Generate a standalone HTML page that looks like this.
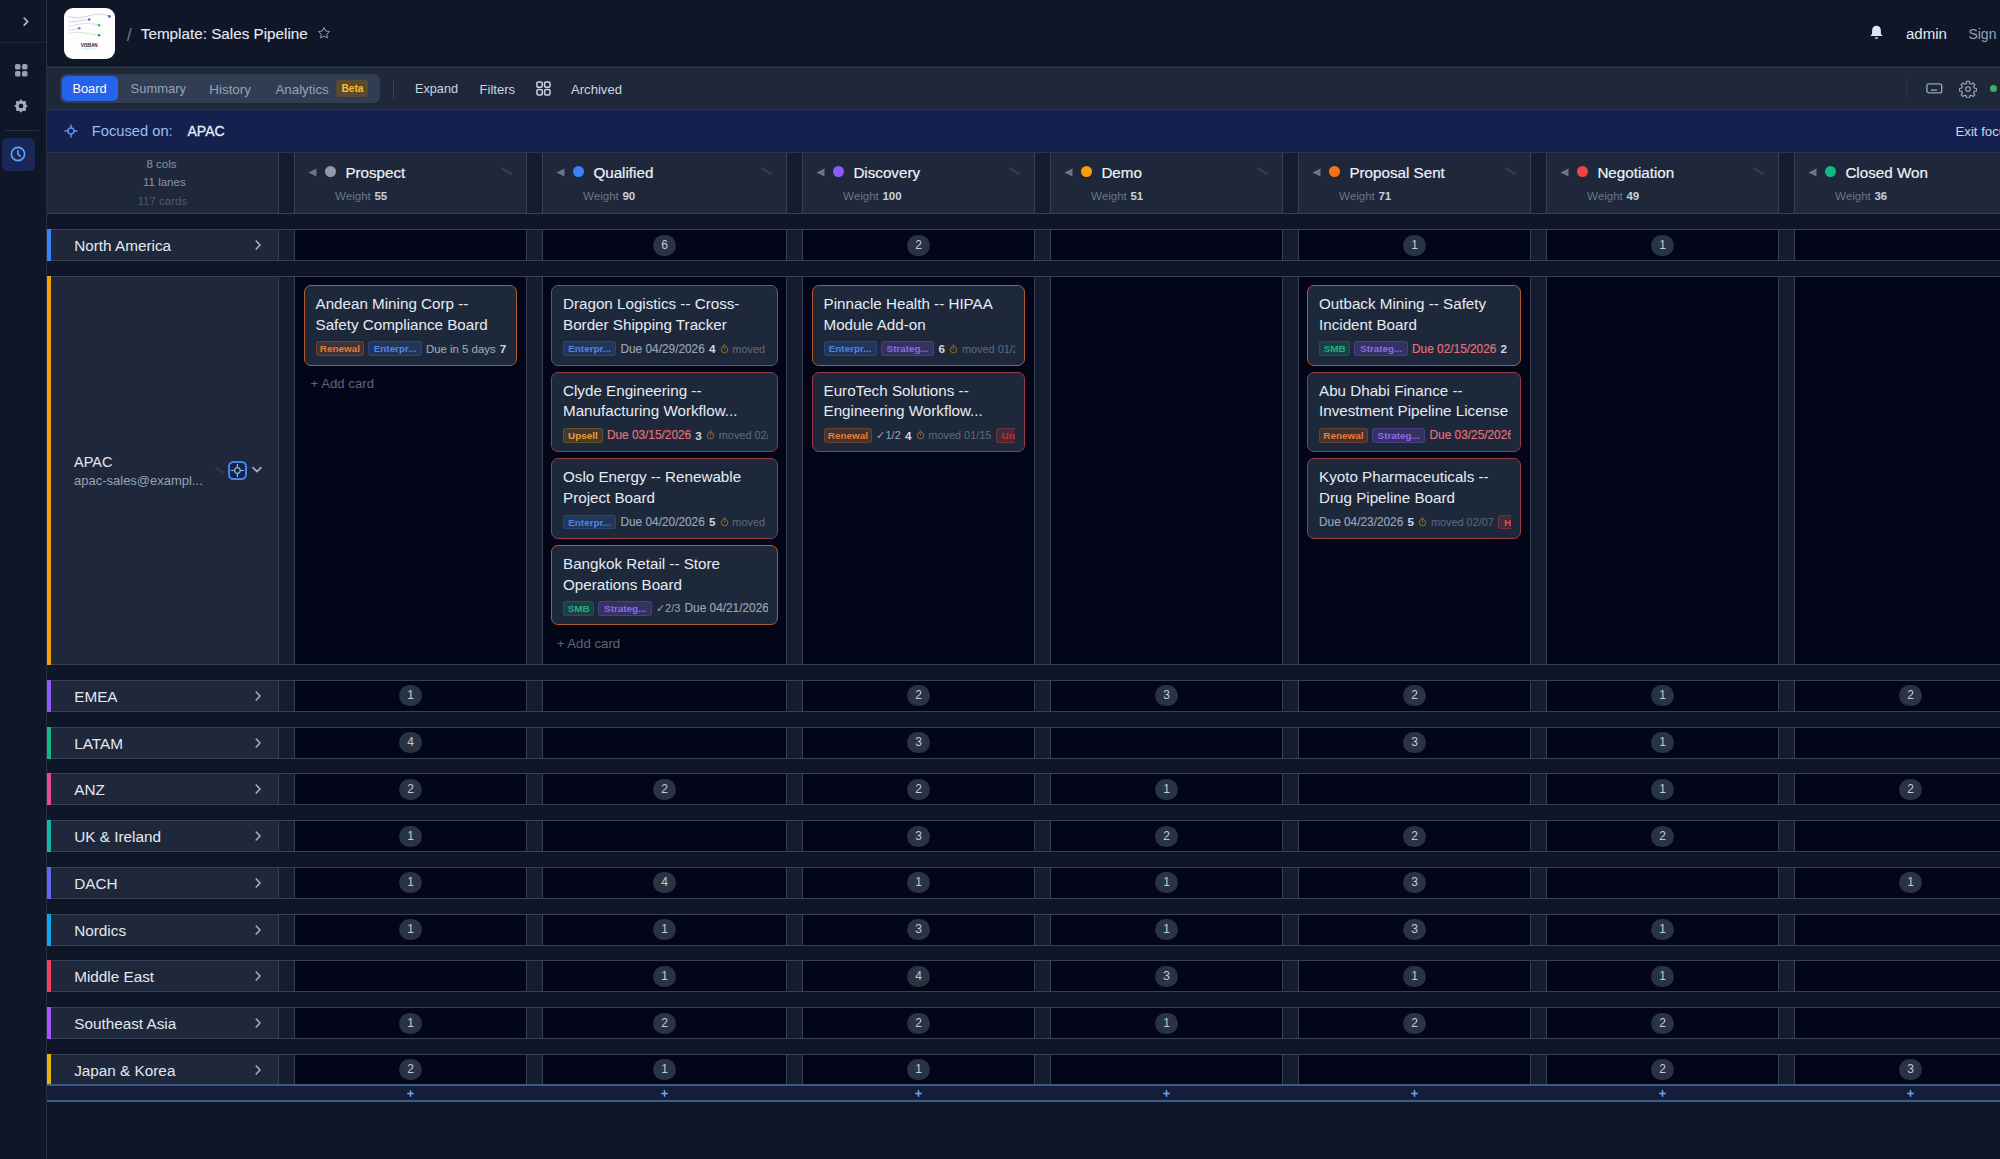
<!DOCTYPE html><html><head><meta charset="utf-8"><style>
*{margin:0;padding:0;box-sizing:border-box}
html,body{width:2000px;height:1159px;overflow:hidden;background:#0f1628;font-family:"Liberation Sans",sans-serif}
.a{position:absolute}
.t{position:absolute;white-space:nowrap}
.card{position:absolute;background:#1e283b;border:1px solid;border-radius:7px;overflow:hidden}
.tt{position:absolute;font-size:15.2px;line-height:20.4px;color:#e6ebf2;white-space:nowrap}
.meta{position:absolute;left:11px;top:55.2px;height:15px;white-space:nowrap;overflow:hidden;display:flex;align-items:center;gap:4.2px}
.bdg{display:inline-block;height:14.5px;line-height:13px;padding:0;text-align:center;overflow:hidden;border:0.8px solid;border-radius:3px;font-size:9.9px;font-weight:700;flex:none}
.due{font-size:11.85px;color:#9aa4b4;flex:none;-webkit-text-stroke:0.15px currentColor}
.num{font-size:11.7px;color:#d0d6e0;flex:none;font-weight:700}
.chk{font-size:11px;color:#9aa4b4;flex:none}
.tim{display:inline-flex;flex:none;margin-right:-0.5px}
.mv{font-size:10.9px;color:#5f6a7b;flex:none}
</style></head><body><div class="a" style="left:0.00px;top:0.00px;width:46.00px;height:1159.00px;background:#0f1628;"></div>
<div class="a" style="left:46.00px;top:0.00px;width:1.00px;height:1159.00px;background:#273143;"></div>
<div class="a" style="left:0.00px;top:42.00px;width:46.00px;height:1.00px;background:#1f2838;"></div>
<svg class="a" style="left:19px;top:15px" width="12" height="12" viewBox="0 0 12 12"><path d="M5.2 3 L8.6 6.6 L5.2 10.2" fill="none" stroke="#b0b9c8" stroke-width="1.7" stroke-linecap="round" stroke-linejoin="round"/></svg>
<svg class="a" style="left:15px;top:64px" width="13" height="13" viewBox="0 0 13 13" fill="#94a0b4"><rect x="0" y="0" width="5.5" height="5.5" rx="1.6"/><rect x="7" y="0" width="5.5" height="5.5" rx="1.6"/><rect x="0" y="7" width="5.5" height="5.5" rx="1.6"/><rect x="7" y="7" width="5.5" height="5.5" rx="1.6"/></svg>
<svg class="a" style="left:14.4px;top:99px" width="14" height="14" viewBox="0 0 14 14"><path fill="#a3aec2" stroke="#a3aec2" stroke-width="0.9" stroke-linejoin="round" fill-rule="evenodd" d="M7.00 0.70 L8.80 2.66 L11.45 2.55 L11.34 5.20 L13.30 7.00 L11.34 8.80 L11.45 11.45 L8.80 11.34 L7.00 13.30 L5.20 11.34 L2.55 11.45 L2.66 8.80 L0.70 7.00 L2.66 5.20 L2.55 2.55 L5.20 2.66Z M7 4.6a2.4 2.4 0 1 0 0 4.8a2.4 2.4 0 1 0 0-4.8z"/><circle cx="7" cy="7" r="2.3" fill="#0f1628"/></svg>
<div class="a" style="left:5.00px;top:130.00px;width:34.00px;height:1.00px;background:#263042;"></div>
<div class="a" style="left:2.00px;top:137.50px;width:32.50px;height:33.00px;background:#1a2759;border-radius:6px;"></div>
<svg class="a" style="left:10px;top:146px" width="16" height="16" viewBox="0 0 16 16"><circle cx="8" cy="8" r="6.6" fill="none" stroke="#60a5fa" stroke-width="1.6"/><path d="M8 4.6 V8.2 L10.2 10.2" fill="none" stroke="#60a5fa" stroke-width="1.6" stroke-linecap="round"/></svg>
<div class="a" style="left:47.00px;top:0.00px;width:1953.00px;height:66.00px;background:#0f1628;"></div>
<div class="a" style="left:64px;top:8px;width:50.5px;height:50.5px;background:#fdfdfd;border-radius:9px;"></div>
<svg class="a" style="left:64px;top:8px" width="51" height="51" viewBox="0 0 51 51">
<path d="M4 8.2 C12 11 20 9.5 27 7.2 S40 6.5 45.4 8.4" fill="none" stroke="#c9c6dc" stroke-width="0.8"/>
<path d="M4.3 13.9 C12 14 18 12 25.2 11.5" fill="none" stroke="#c9c6dc" stroke-width="0.8"/>
<path d="M4.3 18.5 C12 17 18 15 24.5 15.4 S32 16.5 35.1 17.2" fill="none" stroke="#b7e3d2" stroke-width="0.8"/>
<path d="M4.3 22.7 C9 22 12 20.5 15.2 20.3" fill="none" stroke="#c9c6dc" stroke-width="0.8"/>
<path d="M4.5 25.5 C8 24.5 11 24 14 24.2 S28 26 35.1 27.3" fill="none" stroke="#b7e3d2" stroke-width="0.8"/>
<circle cx="45.4" cy="8.4" r="1.3" fill="#5b4fb0"/>
<circle cx="25.2" cy="11.5" r="1.3" fill="#6a5cc0"/>
<circle cx="35.1" cy="17.2" r="1.3" fill="#34b47d"/>
<circle cx="15.2" cy="20.3" r="1.3" fill="#8270d0"/>
<circle cx="35.1" cy="27.3" r="1.3" fill="#2a9a67"/>
<text x="25.2" y="39" text-anchor="middle" font-family="Liberation Sans" font-weight="700" font-size="4.6" fill="#2b2b33" letter-spacing="-0.1">VISBAN</text>
<rect x="18" y="40.6" width="14" height="0.6" fill="#bfe5d4"/>
</svg>
<div class="t " style="left:126.80px;top:25.56px;font-size:18px;line-height:18px;color:#6b778a;">/</div>
<div class="t " style="left:140.80px;top:25.79px;font-size:15.25px;line-height:15.25px;color:#e6ebf3;-webkit-text-stroke:0.1px #e6ebf3;">Template: Sales Pipeline</div>
<svg class="a" style="left:317px;top:26px" width="14" height="14" viewBox="0 0 24 24"><path d="M12 2.5l2.9 6.1 6.6.8-4.9 4.5 1.3 6.6L12 17.2l-5.9 3.3 1.3-6.6L2.5 9.4l6.6-.8z" fill="none" stroke="#94a3b8" stroke-width="1.6" stroke-linejoin="round"/></svg>
<svg class="a" style="left:1869px;top:25px" width="15" height="16" viewBox="0 0 15 16"><path d="M7.5 0.8c-2.6 0-4.4 2-4.4 4.6v3.4L1.4 11h12.2l-1.7-2.2V5.4c0-2.6-1.8-4.6-4.4-4.6z" fill="#dfe5ee"/><rect x="6" y="12.2" width="3" height="1.6" rx="0.8" fill="#dfe5ee"/></svg>
<div class="t " style="left:1906.00px;top:25.96px;font-size:15.05px;line-height:15.05px;color:#e2e8f0;">admin</div>
<div class="t " style="left:1968.40px;top:26.85px;font-size:14px;line-height:14px;color:#94a3b8;">Sign out</div>
<div class="a" style="left:47.00px;top:66.00px;width:1953.00px;height:43.50px;background:#1e2839;"></div>
<div class="a" style="left:47.00px;top:66.50px;width:1953.00px;height:1.00px;background:#2b3548;"></div>
<div class="a" style="left:47.00px;top:109.00px;width:1953.00px;height:1.00px;background:#2b3548;"></div>
<div class="a" style="left:60.00px;top:74.00px;width:320.00px;height:29.00px;background:#313d52;border-radius:6px;"></div>
<div class="a" style="left:62.00px;top:76.00px;width:56.00px;height:25.00px;background:#2563eb;border-radius:5px;"></div>
<div class="t " style="left:72.40px;top:82.97px;font-size:12.85px;line-height:12.85px;color:#ffffff;">Board</div>
<div class="t " style="left:130.60px;top:82.89px;font-size:12.95px;line-height:12.95px;color:#94a3b8;">Summary</div>
<div class="t " style="left:209.30px;top:82.51px;font-size:13.4px;line-height:13.4px;color:#94a3b8;">History</div>
<div class="t " style="left:275.40px;top:82.55px;font-size:13.35px;line-height:13.35px;color:#94a3b8;">Analytics</div>
<div class="a" style="left:336.00px;top:80.00px;width:32.00px;height:17.00px;background:#5a4a32;border-radius:4px;"></div>
<div class="t " style="left:341.50px;top:84.41px;font-size:10.15px;line-height:10.15px;color:#fbbf24;font-weight:700;">Beta</div>
<div class="a" style="left:393.00px;top:80.00px;width:1.00px;height:17.50px;background:#364256;"></div>
<div class="t " style="left:415.00px;top:83.35px;font-size:12.7px;line-height:12.7px;color:#cbd5e1;">Expand</div>
<div class="t " style="left:479.60px;top:83.06px;font-size:13.04px;line-height:13.04px;color:#cbd5e1;">Filters</div>
<svg class="a" style="left:536px;top:81px" width="15" height="15" viewBox="0 0 15 15" fill="none" stroke="#cbd5e1" stroke-width="1.5"><rect x="0.9" y="0.9" width="5.4" height="5.4" rx="1.5"/><rect x="8.6" y="0.9" width="5.4" height="5.4" rx="1.5"/><rect x="0.9" y="8.6" width="5.4" height="5.4" rx="1.5"/><rect x="8.6" y="8.6" width="5.4" height="5.4" rx="1.5"/></svg>
<div class="t " style="left:571.00px;top:83.00px;font-size:13.11px;line-height:13.11px;color:#cbd5e1;">Archived</div>
<div class="a" style="left:1906.00px;top:79.00px;width:1.00px;height:18.50px;background:#2a3447;"></div>
<svg class="a" style="left:1926px;top:83px" width="17" height="11" viewBox="0 0 17 11" fill="none" stroke="#94a3b8" stroke-width="1.4"><rect x="0.9" y="0.9" width="14.8" height="9" rx="2"/><path d="M5 7.1h6"/></svg>
<svg class="a" style="left:1958.5px;top:80px" width="18" height="18" viewBox="0 0 24 24" fill="none" stroke="#94a3b8" stroke-width="1.6" stroke-linejoin="round"><path d="M10.3 1.8h3.4l.6 3 1.9.8 2.5-1.7 2.4 2.4-1.7 2.5.8 1.9 3 .6v3.4l-3 .6-.8 1.9 1.7 2.5-2.4 2.4-2.5-1.7-1.9.8-.6 3h-3.4l-.6-3-1.9-.8-2.5 1.7-2.4-2.4 1.7-2.5-.8-1.9-3-.6v-3.4l3-.6.8-1.9-1.7-2.5 2.4-2.4 2.5 1.7 1.9-.8z"/><circle cx="12" cy="12" r="3"/></svg>
<div class="a" style="left:1990.20px;top:85.10px;width:7.00px;height:7.00px;background:#3fb060;border-radius:50%;"></div>
<div class="a" style="left:47.00px;top:110.00px;width:1953.00px;height:42.50px;background:#14214e;"></div>
<svg class="a" style="left:64px;top:124px" width="14" height="14" viewBox="0 0 14 14" fill="none" stroke="#5b93f0" stroke-width="1.5"><circle cx="7" cy="7" r="3"/><path d="M7 0.5v3.5M7 10v3.5M0.5 7h3.5M10 7h3.5"/></svg>
<div class="t " style="left:91.80px;top:123.56px;font-size:14.7px;line-height:14.7px;color:#9bbcf0;">Focused on:</div>
<div class="t " style="left:187.50px;top:124.15px;font-size:14.0px;line-height:14.0px;color:#e6ecf8;-webkit-text-stroke:0.3px #e6ecf8;">APAC</div>
<div class="t " style="left:1955.50px;top:124.83px;font-size:13.2px;line-height:13.2px;color:#cdd6ea;">Exit focus</div>
<div class="a" style="left:47.00px;top:152.50px;width:1953.00px;height:1006.50px;background:#0f1628;"></div>
<div class="a" style="left:47.00px;top:153.00px;width:1953.00px;height:61.00px;background:#141c2e;"></div>
<div class="a" style="left:47.00px;top:213.00px;width:1953.00px;height:1.00px;background:#374155;"></div>
<div class="a" style="left:47.00px;top:153.00px;width:231.50px;height:60.00px;background:#1e283a;"></div>
<div class="a" style="left:278.00px;top:153.00px;width:1.00px;height:60.00px;background:#374155;"></div>
<div class="a" style="left:47.00px;top:152.00px;width:1953.00px;height:1.00px;background:#283455;"></div>
<div class="t c" style="left:146.50px;top:159.27px;font-size:11.5px;line-height:11.5px;color:#8a94a6;width:32px;">8 cols</div>
<div class="t " style="left:143.00px;top:177.27px;font-size:11.5px;line-height:11.5px;color:#8a94a6;">11 lanes</div>
<div class="t " style="left:137.50px;top:195.77px;font-size:11.5px;line-height:11.5px;color:#4f5a6c;">117 cards</div>
<div class="a" style="left:294.00px;top:153.00px;width:233.00px;height:60.00px;background:#1e283a;border-left:1px solid #374155;border-right:1px solid #374155;box-sizing:border-box;"></div>
<svg class="a" style="left:308px;top:167.5px" width="9" height="9" viewBox="0 0 9 9"><path d="M0.5 4.5 L8.5 0.5 V8.5z" fill="#6b7588"/></svg>
<div class="a" style="left:325.40px;top:166.10px;width:11.00px;height:11.00px;background:#8f99aa;border-radius:50%;"></div>
<div class="t " style="left:345.40px;top:164.63px;font-size:15.2px;line-height:15.2px;color:#eef2f7;-webkit-text-stroke:0.2px #eef2f7;">Prospect</div>
<svg class="a" style="left:501px;top:166px" width="12" height="11" viewBox="0 0 12 11"><path d="M1.8 2.6 L9.6 7.6" stroke="#343f52" stroke-width="2.8" stroke-linecap="round"/><path d="M3.2 2.4 L9.4 6.3" stroke="#1e293b" stroke-width="0.6"/></svg>
<div class="t " style="left:335.00px;top:190.51px;font-size:11.57px;line-height:11.57px;color:#6b7588;">Weight</div>
<div class="t " style="left:374.40px;top:190.57px;font-size:11.5px;line-height:11.5px;color:#c8d0dc;font-weight:700;">55</div>
<div class="a" style="left:542.00px;top:153.00px;width:245.00px;height:60.00px;background:#1e283a;border-left:1px solid #374155;border-right:1px solid #374155;box-sizing:border-box;"></div>
<svg class="a" style="left:556px;top:167.5px" width="9" height="9" viewBox="0 0 9 9"><path d="M0.5 4.5 L8.5 0.5 V8.5z" fill="#6b7588"/></svg>
<div class="a" style="left:573.40px;top:166.10px;width:11.00px;height:11.00px;background:#3b82f6;border-radius:50%;"></div>
<div class="t " style="left:593.40px;top:164.63px;font-size:15.2px;line-height:15.2px;color:#eef2f7;-webkit-text-stroke:0.2px #eef2f7;">Qualified</div>
<svg class="a" style="left:761px;top:166px" width="12" height="11" viewBox="0 0 12 11"><path d="M1.8 2.6 L9.6 7.6" stroke="#343f52" stroke-width="2.8" stroke-linecap="round"/><path d="M3.2 2.4 L9.4 6.3" stroke="#1e293b" stroke-width="0.6"/></svg>
<div class="t " style="left:583.00px;top:190.51px;font-size:11.57px;line-height:11.57px;color:#6b7588;">Weight</div>
<div class="t " style="left:622.40px;top:190.57px;font-size:11.5px;line-height:11.5px;color:#c8d0dc;font-weight:700;">90</div>
<div class="a" style="left:802.00px;top:153.00px;width:233.00px;height:60.00px;background:#1e283a;border-left:1px solid #374155;border-right:1px solid #374155;box-sizing:border-box;"></div>
<svg class="a" style="left:816px;top:167.5px" width="9" height="9" viewBox="0 0 9 9"><path d="M0.5 4.5 L8.5 0.5 V8.5z" fill="#6b7588"/></svg>
<div class="a" style="left:833.40px;top:166.10px;width:11.00px;height:11.00px;background:#8b5cf6;border-radius:50%;"></div>
<div class="t " style="left:853.40px;top:164.63px;font-size:15.2px;line-height:15.2px;color:#eef2f7;-webkit-text-stroke:0.2px #eef2f7;">Discovery</div>
<svg class="a" style="left:1009px;top:166px" width="12" height="11" viewBox="0 0 12 11"><path d="M1.8 2.6 L9.6 7.6" stroke="#343f52" stroke-width="2.8" stroke-linecap="round"/><path d="M3.2 2.4 L9.4 6.3" stroke="#1e293b" stroke-width="0.6"/></svg>
<div class="t " style="left:843.00px;top:190.51px;font-size:11.57px;line-height:11.57px;color:#6b7588;">Weight</div>
<div class="t " style="left:882.40px;top:190.57px;font-size:11.5px;line-height:11.5px;color:#c8d0dc;font-weight:700;">100</div>
<div class="a" style="left:1050.00px;top:153.00px;width:233.00px;height:60.00px;background:#1e283a;border-left:1px solid #374155;border-right:1px solid #374155;box-sizing:border-box;"></div>
<svg class="a" style="left:1064px;top:167.5px" width="9" height="9" viewBox="0 0 9 9"><path d="M0.5 4.5 L8.5 0.5 V8.5z" fill="#6b7588"/></svg>
<div class="a" style="left:1081.40px;top:166.10px;width:11.00px;height:11.00px;background:#f59e0b;border-radius:50%;"></div>
<div class="t " style="left:1101.40px;top:164.63px;font-size:15.2px;line-height:15.2px;color:#eef2f7;-webkit-text-stroke:0.2px #eef2f7;">Demo</div>
<svg class="a" style="left:1257px;top:166px" width="12" height="11" viewBox="0 0 12 11"><path d="M1.8 2.6 L9.6 7.6" stroke="#343f52" stroke-width="2.8" stroke-linecap="round"/><path d="M3.2 2.4 L9.4 6.3" stroke="#1e293b" stroke-width="0.6"/></svg>
<div class="t " style="left:1091.00px;top:190.51px;font-size:11.57px;line-height:11.57px;color:#6b7588;">Weight</div>
<div class="t " style="left:1130.40px;top:190.57px;font-size:11.5px;line-height:11.5px;color:#c8d0dc;font-weight:700;">51</div>
<div class="a" style="left:1298.00px;top:153.00px;width:233.00px;height:60.00px;background:#1e283a;border-left:1px solid #374155;border-right:1px solid #374155;box-sizing:border-box;"></div>
<svg class="a" style="left:1312px;top:167.5px" width="9" height="9" viewBox="0 0 9 9"><path d="M0.5 4.5 L8.5 0.5 V8.5z" fill="#6b7588"/></svg>
<div class="a" style="left:1329.40px;top:166.10px;width:11.00px;height:11.00px;background:#f97316;border-radius:50%;"></div>
<div class="t " style="left:1349.40px;top:164.63px;font-size:15.2px;line-height:15.2px;color:#eef2f7;-webkit-text-stroke:0.2px #eef2f7;">Proposal Sent</div>
<svg class="a" style="left:1505px;top:166px" width="12" height="11" viewBox="0 0 12 11"><path d="M1.8 2.6 L9.6 7.6" stroke="#343f52" stroke-width="2.8" stroke-linecap="round"/><path d="M3.2 2.4 L9.4 6.3" stroke="#1e293b" stroke-width="0.6"/></svg>
<div class="t " style="left:1339.00px;top:190.51px;font-size:11.57px;line-height:11.57px;color:#6b7588;">Weight</div>
<div class="t " style="left:1378.40px;top:190.57px;font-size:11.5px;line-height:11.5px;color:#c8d0dc;font-weight:700;">71</div>
<div class="a" style="left:1546.00px;top:153.00px;width:233.00px;height:60.00px;background:#1e283a;border-left:1px solid #374155;border-right:1px solid #374155;box-sizing:border-box;"></div>
<svg class="a" style="left:1560px;top:167.5px" width="9" height="9" viewBox="0 0 9 9"><path d="M0.5 4.5 L8.5 0.5 V8.5z" fill="#6b7588"/></svg>
<div class="a" style="left:1577.40px;top:166.10px;width:11.00px;height:11.00px;background:#ef4444;border-radius:50%;"></div>
<div class="t " style="left:1597.40px;top:164.63px;font-size:15.2px;line-height:15.2px;color:#eef2f7;-webkit-text-stroke:0.2px #eef2f7;">Negotiation</div>
<svg class="a" style="left:1753px;top:166px" width="12" height="11" viewBox="0 0 12 11"><path d="M1.8 2.6 L9.6 7.6" stroke="#343f52" stroke-width="2.8" stroke-linecap="round"/><path d="M3.2 2.4 L9.4 6.3" stroke="#1e293b" stroke-width="0.6"/></svg>
<div class="t " style="left:1587.00px;top:190.51px;font-size:11.57px;line-height:11.57px;color:#6b7588;">Weight</div>
<div class="t " style="left:1626.40px;top:190.57px;font-size:11.5px;line-height:11.5px;color:#c8d0dc;font-weight:700;">49</div>
<div class="a" style="left:1794.00px;top:153.00px;width:233.00px;height:60.00px;background:#1e283a;border-left:1px solid #374155;border-right:1px solid #374155;box-sizing:border-box;"></div>
<svg class="a" style="left:1808px;top:167.5px" width="9" height="9" viewBox="0 0 9 9"><path d="M0.5 4.5 L8.5 0.5 V8.5z" fill="#6b7588"/></svg>
<div class="a" style="left:1825.40px;top:166.10px;width:11.00px;height:11.00px;background:#10b981;border-radius:50%;"></div>
<div class="t " style="left:1845.40px;top:164.63px;font-size:15.2px;line-height:15.2px;color:#eef2f7;-webkit-text-stroke:0.2px #eef2f7;">Closed Won</div>
<svg class="a" style="left:2001px;top:166px" width="12" height="11" viewBox="0 0 12 11"><path d="M1.8 2.6 L9.6 7.6" stroke="#343f52" stroke-width="2.8" stroke-linecap="round"/><path d="M3.2 2.4 L9.4 6.3" stroke="#1e293b" stroke-width="0.6"/></svg>
<div class="t " style="left:1835.00px;top:190.51px;font-size:11.57px;line-height:11.57px;color:#6b7588;">Weight</div>
<div class="t " style="left:1874.40px;top:190.57px;font-size:11.5px;line-height:11.5px;color:#c8d0dc;font-weight:700;">36</div>
<div class="a" style="left:47.00px;top:229.00px;width:1953.00px;height:32.00px;background:#141c2e;"></div>
<div class="a" style="left:47.00px;top:229.00px;width:1953.00px;height:1.00px;background:#374155;"></div>
<div class="a" style="left:47.00px;top:260.00px;width:1953.00px;height:1.00px;background:#374155;"></div>
<div class="a" style="left:47.00px;top:230.00px;width:231.50px;height:30.00px;background:#1e283a;"></div>
<div class="a" style="left:278.00px;top:229.00px;width:1.00px;height:32.00px;background:#374155;"></div>
<div class="a" style="left:47.00px;top:229.00px;width:4.00px;height:32.00px;background:#3b82f6;"></div>
<div class="a" style="left:294.00px;top:230.00px;width:233.00px;height:30.00px;background:#030618;"></div>
<div class="a" style="left:294.00px;top:229.00px;width:1.00px;height:32.00px;background:#374155;"></div>
<div class="a" style="left:526.00px;top:229.00px;width:1.00px;height:32.00px;background:#374155;"></div>
<div class="a" style="left:542.00px;top:230.00px;width:245.00px;height:30.00px;background:#030618;"></div>
<div class="a" style="left:542.00px;top:229.00px;width:1.00px;height:32.00px;background:#374155;"></div>
<div class="a" style="left:786.00px;top:229.00px;width:1.00px;height:32.00px;background:#374155;"></div>
<div class="a" style="left:653.00px;top:234.50px;width:23.00px;height:21.00px;background:#293344;border-radius:11px;"></div>
<div class="t" style="left:653.50px;top:234.50px;width:22px;height:21px;line-height:21px;text-align:center;font-size:12px;color:#c3cad6;">6</div>
<div class="a" style="left:802.00px;top:230.00px;width:233.00px;height:30.00px;background:#030618;"></div>
<div class="a" style="left:802.00px;top:229.00px;width:1.00px;height:32.00px;background:#374155;"></div>
<div class="a" style="left:1034.00px;top:229.00px;width:1.00px;height:32.00px;background:#374155;"></div>
<div class="a" style="left:907.00px;top:234.50px;width:23.00px;height:21.00px;background:#293344;border-radius:11px;"></div>
<div class="t" style="left:907.50px;top:234.50px;width:22px;height:21px;line-height:21px;text-align:center;font-size:12px;color:#c3cad6;">2</div>
<div class="a" style="left:1050.00px;top:230.00px;width:233.00px;height:30.00px;background:#030618;"></div>
<div class="a" style="left:1050.00px;top:229.00px;width:1.00px;height:32.00px;background:#374155;"></div>
<div class="a" style="left:1282.00px;top:229.00px;width:1.00px;height:32.00px;background:#374155;"></div>
<div class="a" style="left:1298.00px;top:230.00px;width:233.00px;height:30.00px;background:#030618;"></div>
<div class="a" style="left:1298.00px;top:229.00px;width:1.00px;height:32.00px;background:#374155;"></div>
<div class="a" style="left:1530.00px;top:229.00px;width:1.00px;height:32.00px;background:#374155;"></div>
<div class="a" style="left:1403.00px;top:234.50px;width:23.00px;height:21.00px;background:#293344;border-radius:11px;"></div>
<div class="t" style="left:1403.50px;top:234.50px;width:22px;height:21px;line-height:21px;text-align:center;font-size:12px;color:#c3cad6;">1</div>
<div class="a" style="left:1546.00px;top:230.00px;width:233.00px;height:30.00px;background:#030618;"></div>
<div class="a" style="left:1546.00px;top:229.00px;width:1.00px;height:32.00px;background:#374155;"></div>
<div class="a" style="left:1778.00px;top:229.00px;width:1.00px;height:32.00px;background:#374155;"></div>
<div class="a" style="left:1651.00px;top:234.50px;width:23.00px;height:21.00px;background:#293344;border-radius:11px;"></div>
<div class="t" style="left:1651.50px;top:234.50px;width:22px;height:21px;line-height:21px;text-align:center;font-size:12px;color:#c3cad6;">1</div>
<div class="a" style="left:1794.00px;top:230.00px;width:233.00px;height:30.00px;background:#030618;"></div>
<div class="a" style="left:1794.00px;top:229.00px;width:1.00px;height:32.00px;background:#374155;"></div>
<div class="a" style="left:2026.00px;top:229.00px;width:1.00px;height:32.00px;background:#374155;"></div>
<div class="t " style="left:74.20px;top:238.05px;font-size:15.3px;line-height:15.3px;color:#e2e8f0;">North America</div>
<svg class="a" style="left:251.5px;top:239.00px" width="12" height="12" viewBox="0 0 12 12"><path d="M4.2 2 L8 6 L4.2 10" fill="none" stroke="#aab4c3" stroke-width="1.5" stroke-linecap="round" stroke-linejoin="round"/></svg>
<div class="a" style="left:47.00px;top:276.00px;width:1953.00px;height:388.50px;background:#141c2e;"></div>
<div class="a" style="left:47.00px;top:276.00px;width:1953.00px;height:1.00px;background:#374155;"></div>
<div class="a" style="left:47.00px;top:663.50px;width:1953.00px;height:1.00px;background:#374155;"></div>
<div class="a" style="left:47.00px;top:277.00px;width:231.50px;height:386.50px;background:#1e283a;"></div>
<div class="a" style="left:278.00px;top:276.00px;width:1.00px;height:388.50px;background:#374155;"></div>
<div class="a" style="left:47.00px;top:276.00px;width:4.00px;height:388.50px;background:#f59e0b;"></div>
<div class="a" style="left:294.00px;top:277.00px;width:233.00px;height:386.50px;background:#030618;"></div>
<div class="a" style="left:294.00px;top:276.00px;width:1.00px;height:388.50px;background:#374155;"></div>
<div class="a" style="left:526.00px;top:276.00px;width:1.00px;height:388.50px;background:#374155;"></div>
<div class="a" style="left:542.00px;top:277.00px;width:245.00px;height:386.50px;background:#030618;"></div>
<div class="a" style="left:542.00px;top:276.00px;width:1.00px;height:388.50px;background:#374155;"></div>
<div class="a" style="left:786.00px;top:276.00px;width:1.00px;height:388.50px;background:#374155;"></div>
<div class="a" style="left:802.00px;top:277.00px;width:233.00px;height:386.50px;background:#030618;"></div>
<div class="a" style="left:802.00px;top:276.00px;width:1.00px;height:388.50px;background:#374155;"></div>
<div class="a" style="left:1034.00px;top:276.00px;width:1.00px;height:388.50px;background:#374155;"></div>
<div class="a" style="left:1050.00px;top:277.00px;width:233.00px;height:386.50px;background:#030618;"></div>
<div class="a" style="left:1050.00px;top:276.00px;width:1.00px;height:388.50px;background:#374155;"></div>
<div class="a" style="left:1282.00px;top:276.00px;width:1.00px;height:388.50px;background:#374155;"></div>
<div class="a" style="left:1298.00px;top:277.00px;width:233.00px;height:386.50px;background:#030618;"></div>
<div class="a" style="left:1298.00px;top:276.00px;width:1.00px;height:388.50px;background:#374155;"></div>
<div class="a" style="left:1530.00px;top:276.00px;width:1.00px;height:388.50px;background:#374155;"></div>
<div class="a" style="left:1546.00px;top:277.00px;width:233.00px;height:386.50px;background:#030618;"></div>
<div class="a" style="left:1546.00px;top:276.00px;width:1.00px;height:388.50px;background:#374155;"></div>
<div class="a" style="left:1778.00px;top:276.00px;width:1.00px;height:388.50px;background:#374155;"></div>
<div class="a" style="left:1794.00px;top:277.00px;width:233.00px;height:386.50px;background:#030618;"></div>
<div class="a" style="left:1794.00px;top:276.00px;width:1.00px;height:388.50px;background:#374155;"></div>
<div class="a" style="left:2026.00px;top:276.00px;width:1.00px;height:388.50px;background:#374155;"></div>
<div class="a" style="left:47.00px;top:679.90px;width:1953.00px;height:32.00px;background:#141c2e;"></div>
<div class="a" style="left:47.00px;top:679.90px;width:1953.00px;height:1.00px;background:#374155;"></div>
<div class="a" style="left:47.00px;top:710.90px;width:1953.00px;height:1.00px;background:#374155;"></div>
<div class="a" style="left:47.00px;top:680.90px;width:231.50px;height:30.00px;background:#1e283a;"></div>
<div class="a" style="left:278.00px;top:679.90px;width:1.00px;height:32.00px;background:#374155;"></div>
<div class="a" style="left:47.00px;top:679.90px;width:4.00px;height:32.00px;background:#8b5cf6;"></div>
<div class="a" style="left:294.00px;top:680.90px;width:233.00px;height:30.00px;background:#030618;"></div>
<div class="a" style="left:294.00px;top:679.90px;width:1.00px;height:32.00px;background:#374155;"></div>
<div class="a" style="left:526.00px;top:679.90px;width:1.00px;height:32.00px;background:#374155;"></div>
<div class="a" style="left:399.00px;top:685.40px;width:23.00px;height:21.00px;background:#293344;border-radius:11px;"></div>
<div class="t" style="left:399.50px;top:685.40px;width:22px;height:21px;line-height:21px;text-align:center;font-size:12px;color:#c3cad6;">1</div>
<div class="a" style="left:542.00px;top:680.90px;width:245.00px;height:30.00px;background:#030618;"></div>
<div class="a" style="left:542.00px;top:679.90px;width:1.00px;height:32.00px;background:#374155;"></div>
<div class="a" style="left:786.00px;top:679.90px;width:1.00px;height:32.00px;background:#374155;"></div>
<div class="a" style="left:802.00px;top:680.90px;width:233.00px;height:30.00px;background:#030618;"></div>
<div class="a" style="left:802.00px;top:679.90px;width:1.00px;height:32.00px;background:#374155;"></div>
<div class="a" style="left:1034.00px;top:679.90px;width:1.00px;height:32.00px;background:#374155;"></div>
<div class="a" style="left:907.00px;top:685.40px;width:23.00px;height:21.00px;background:#293344;border-radius:11px;"></div>
<div class="t" style="left:907.50px;top:685.40px;width:22px;height:21px;line-height:21px;text-align:center;font-size:12px;color:#c3cad6;">2</div>
<div class="a" style="left:1050.00px;top:680.90px;width:233.00px;height:30.00px;background:#030618;"></div>
<div class="a" style="left:1050.00px;top:679.90px;width:1.00px;height:32.00px;background:#374155;"></div>
<div class="a" style="left:1282.00px;top:679.90px;width:1.00px;height:32.00px;background:#374155;"></div>
<div class="a" style="left:1155.00px;top:685.40px;width:23.00px;height:21.00px;background:#293344;border-radius:11px;"></div>
<div class="t" style="left:1155.50px;top:685.40px;width:22px;height:21px;line-height:21px;text-align:center;font-size:12px;color:#c3cad6;">3</div>
<div class="a" style="left:1298.00px;top:680.90px;width:233.00px;height:30.00px;background:#030618;"></div>
<div class="a" style="left:1298.00px;top:679.90px;width:1.00px;height:32.00px;background:#374155;"></div>
<div class="a" style="left:1530.00px;top:679.90px;width:1.00px;height:32.00px;background:#374155;"></div>
<div class="a" style="left:1403.00px;top:685.40px;width:23.00px;height:21.00px;background:#293344;border-radius:11px;"></div>
<div class="t" style="left:1403.50px;top:685.40px;width:22px;height:21px;line-height:21px;text-align:center;font-size:12px;color:#c3cad6;">2</div>
<div class="a" style="left:1546.00px;top:680.90px;width:233.00px;height:30.00px;background:#030618;"></div>
<div class="a" style="left:1546.00px;top:679.90px;width:1.00px;height:32.00px;background:#374155;"></div>
<div class="a" style="left:1778.00px;top:679.90px;width:1.00px;height:32.00px;background:#374155;"></div>
<div class="a" style="left:1651.00px;top:685.40px;width:23.00px;height:21.00px;background:#293344;border-radius:11px;"></div>
<div class="t" style="left:1651.50px;top:685.40px;width:22px;height:21px;line-height:21px;text-align:center;font-size:12px;color:#c3cad6;">1</div>
<div class="a" style="left:1794.00px;top:680.90px;width:233.00px;height:30.00px;background:#030618;"></div>
<div class="a" style="left:1794.00px;top:679.90px;width:1.00px;height:32.00px;background:#374155;"></div>
<div class="a" style="left:2026.00px;top:679.90px;width:1.00px;height:32.00px;background:#374155;"></div>
<div class="a" style="left:1899.00px;top:685.40px;width:23.00px;height:21.00px;background:#293344;border-radius:11px;"></div>
<div class="t" style="left:1899.50px;top:685.40px;width:22px;height:21px;line-height:21px;text-align:center;font-size:12px;color:#c3cad6;">2</div>
<div class="t " style="left:74.20px;top:688.95px;font-size:15.3px;line-height:15.3px;color:#e2e8f0;">EMEA</div>
<svg class="a" style="left:251.5px;top:689.90px" width="12" height="12" viewBox="0 0 12 12"><path d="M4.2 2 L8 6 L4.2 10" fill="none" stroke="#aab4c3" stroke-width="1.5" stroke-linecap="round" stroke-linejoin="round"/></svg>
<div class="a" style="left:47.00px;top:726.65px;width:1953.00px;height:32.00px;background:#141c2e;"></div>
<div class="a" style="left:47.00px;top:726.65px;width:1953.00px;height:1.00px;background:#374155;"></div>
<div class="a" style="left:47.00px;top:757.65px;width:1953.00px;height:1.00px;background:#374155;"></div>
<div class="a" style="left:47.00px;top:727.65px;width:231.50px;height:30.00px;background:#1e283a;"></div>
<div class="a" style="left:278.00px;top:726.65px;width:1.00px;height:32.00px;background:#374155;"></div>
<div class="a" style="left:47.00px;top:726.65px;width:4.00px;height:32.00px;background:#10b981;"></div>
<div class="a" style="left:294.00px;top:727.65px;width:233.00px;height:30.00px;background:#030618;"></div>
<div class="a" style="left:294.00px;top:726.65px;width:1.00px;height:32.00px;background:#374155;"></div>
<div class="a" style="left:526.00px;top:726.65px;width:1.00px;height:32.00px;background:#374155;"></div>
<div class="a" style="left:399.00px;top:732.15px;width:23.00px;height:21.00px;background:#293344;border-radius:11px;"></div>
<div class="t" style="left:399.50px;top:732.15px;width:22px;height:21px;line-height:21px;text-align:center;font-size:12px;color:#c3cad6;">4</div>
<div class="a" style="left:542.00px;top:727.65px;width:245.00px;height:30.00px;background:#030618;"></div>
<div class="a" style="left:542.00px;top:726.65px;width:1.00px;height:32.00px;background:#374155;"></div>
<div class="a" style="left:786.00px;top:726.65px;width:1.00px;height:32.00px;background:#374155;"></div>
<div class="a" style="left:802.00px;top:727.65px;width:233.00px;height:30.00px;background:#030618;"></div>
<div class="a" style="left:802.00px;top:726.65px;width:1.00px;height:32.00px;background:#374155;"></div>
<div class="a" style="left:1034.00px;top:726.65px;width:1.00px;height:32.00px;background:#374155;"></div>
<div class="a" style="left:907.00px;top:732.15px;width:23.00px;height:21.00px;background:#293344;border-radius:11px;"></div>
<div class="t" style="left:907.50px;top:732.15px;width:22px;height:21px;line-height:21px;text-align:center;font-size:12px;color:#c3cad6;">3</div>
<div class="a" style="left:1050.00px;top:727.65px;width:233.00px;height:30.00px;background:#030618;"></div>
<div class="a" style="left:1050.00px;top:726.65px;width:1.00px;height:32.00px;background:#374155;"></div>
<div class="a" style="left:1282.00px;top:726.65px;width:1.00px;height:32.00px;background:#374155;"></div>
<div class="a" style="left:1298.00px;top:727.65px;width:233.00px;height:30.00px;background:#030618;"></div>
<div class="a" style="left:1298.00px;top:726.65px;width:1.00px;height:32.00px;background:#374155;"></div>
<div class="a" style="left:1530.00px;top:726.65px;width:1.00px;height:32.00px;background:#374155;"></div>
<div class="a" style="left:1403.00px;top:732.15px;width:23.00px;height:21.00px;background:#293344;border-radius:11px;"></div>
<div class="t" style="left:1403.50px;top:732.15px;width:22px;height:21px;line-height:21px;text-align:center;font-size:12px;color:#c3cad6;">3</div>
<div class="a" style="left:1546.00px;top:727.65px;width:233.00px;height:30.00px;background:#030618;"></div>
<div class="a" style="left:1546.00px;top:726.65px;width:1.00px;height:32.00px;background:#374155;"></div>
<div class="a" style="left:1778.00px;top:726.65px;width:1.00px;height:32.00px;background:#374155;"></div>
<div class="a" style="left:1651.00px;top:732.15px;width:23.00px;height:21.00px;background:#293344;border-radius:11px;"></div>
<div class="t" style="left:1651.50px;top:732.15px;width:22px;height:21px;line-height:21px;text-align:center;font-size:12px;color:#c3cad6;">1</div>
<div class="a" style="left:1794.00px;top:727.65px;width:233.00px;height:30.00px;background:#030618;"></div>
<div class="a" style="left:1794.00px;top:726.65px;width:1.00px;height:32.00px;background:#374155;"></div>
<div class="a" style="left:2026.00px;top:726.65px;width:1.00px;height:32.00px;background:#374155;"></div>
<div class="t " style="left:74.20px;top:735.70px;font-size:15.3px;line-height:15.3px;color:#e2e8f0;">LATAM</div>
<svg class="a" style="left:251.5px;top:736.65px" width="12" height="12" viewBox="0 0 12 12"><path d="M4.2 2 L8 6 L4.2 10" fill="none" stroke="#aab4c3" stroke-width="1.5" stroke-linecap="round" stroke-linejoin="round"/></svg>
<div class="a" style="left:47.00px;top:773.40px;width:1953.00px;height:32.00px;background:#141c2e;"></div>
<div class="a" style="left:47.00px;top:773.40px;width:1953.00px;height:1.00px;background:#374155;"></div>
<div class="a" style="left:47.00px;top:804.40px;width:1953.00px;height:1.00px;background:#374155;"></div>
<div class="a" style="left:47.00px;top:774.40px;width:231.50px;height:30.00px;background:#1e283a;"></div>
<div class="a" style="left:278.00px;top:773.40px;width:1.00px;height:32.00px;background:#374155;"></div>
<div class="a" style="left:47.00px;top:773.40px;width:4.00px;height:32.00px;background:#ec4899;"></div>
<div class="a" style="left:294.00px;top:774.40px;width:233.00px;height:30.00px;background:#030618;"></div>
<div class="a" style="left:294.00px;top:773.40px;width:1.00px;height:32.00px;background:#374155;"></div>
<div class="a" style="left:526.00px;top:773.40px;width:1.00px;height:32.00px;background:#374155;"></div>
<div class="a" style="left:399.00px;top:778.90px;width:23.00px;height:21.00px;background:#293344;border-radius:11px;"></div>
<div class="t" style="left:399.50px;top:778.90px;width:22px;height:21px;line-height:21px;text-align:center;font-size:12px;color:#c3cad6;">2</div>
<div class="a" style="left:542.00px;top:774.40px;width:245.00px;height:30.00px;background:#030618;"></div>
<div class="a" style="left:542.00px;top:773.40px;width:1.00px;height:32.00px;background:#374155;"></div>
<div class="a" style="left:786.00px;top:773.40px;width:1.00px;height:32.00px;background:#374155;"></div>
<div class="a" style="left:653.00px;top:778.90px;width:23.00px;height:21.00px;background:#293344;border-radius:11px;"></div>
<div class="t" style="left:653.50px;top:778.90px;width:22px;height:21px;line-height:21px;text-align:center;font-size:12px;color:#c3cad6;">2</div>
<div class="a" style="left:802.00px;top:774.40px;width:233.00px;height:30.00px;background:#030618;"></div>
<div class="a" style="left:802.00px;top:773.40px;width:1.00px;height:32.00px;background:#374155;"></div>
<div class="a" style="left:1034.00px;top:773.40px;width:1.00px;height:32.00px;background:#374155;"></div>
<div class="a" style="left:907.00px;top:778.90px;width:23.00px;height:21.00px;background:#293344;border-radius:11px;"></div>
<div class="t" style="left:907.50px;top:778.90px;width:22px;height:21px;line-height:21px;text-align:center;font-size:12px;color:#c3cad6;">2</div>
<div class="a" style="left:1050.00px;top:774.40px;width:233.00px;height:30.00px;background:#030618;"></div>
<div class="a" style="left:1050.00px;top:773.40px;width:1.00px;height:32.00px;background:#374155;"></div>
<div class="a" style="left:1282.00px;top:773.40px;width:1.00px;height:32.00px;background:#374155;"></div>
<div class="a" style="left:1155.00px;top:778.90px;width:23.00px;height:21.00px;background:#293344;border-radius:11px;"></div>
<div class="t" style="left:1155.50px;top:778.90px;width:22px;height:21px;line-height:21px;text-align:center;font-size:12px;color:#c3cad6;">1</div>
<div class="a" style="left:1298.00px;top:774.40px;width:233.00px;height:30.00px;background:#030618;"></div>
<div class="a" style="left:1298.00px;top:773.40px;width:1.00px;height:32.00px;background:#374155;"></div>
<div class="a" style="left:1530.00px;top:773.40px;width:1.00px;height:32.00px;background:#374155;"></div>
<div class="a" style="left:1546.00px;top:774.40px;width:233.00px;height:30.00px;background:#030618;"></div>
<div class="a" style="left:1546.00px;top:773.40px;width:1.00px;height:32.00px;background:#374155;"></div>
<div class="a" style="left:1778.00px;top:773.40px;width:1.00px;height:32.00px;background:#374155;"></div>
<div class="a" style="left:1651.00px;top:778.90px;width:23.00px;height:21.00px;background:#293344;border-radius:11px;"></div>
<div class="t" style="left:1651.50px;top:778.90px;width:22px;height:21px;line-height:21px;text-align:center;font-size:12px;color:#c3cad6;">1</div>
<div class="a" style="left:1794.00px;top:774.40px;width:233.00px;height:30.00px;background:#030618;"></div>
<div class="a" style="left:1794.00px;top:773.40px;width:1.00px;height:32.00px;background:#374155;"></div>
<div class="a" style="left:2026.00px;top:773.40px;width:1.00px;height:32.00px;background:#374155;"></div>
<div class="a" style="left:1899.00px;top:778.90px;width:23.00px;height:21.00px;background:#293344;border-radius:11px;"></div>
<div class="t" style="left:1899.50px;top:778.90px;width:22px;height:21px;line-height:21px;text-align:center;font-size:12px;color:#c3cad6;">2</div>
<div class="t " style="left:74.20px;top:782.45px;font-size:15.3px;line-height:15.3px;color:#e2e8f0;">ANZ</div>
<svg class="a" style="left:251.5px;top:783.40px" width="12" height="12" viewBox="0 0 12 12"><path d="M4.2 2 L8 6 L4.2 10" fill="none" stroke="#aab4c3" stroke-width="1.5" stroke-linecap="round" stroke-linejoin="round"/></svg>
<div class="a" style="left:47.00px;top:820.15px;width:1953.00px;height:32.00px;background:#141c2e;"></div>
<div class="a" style="left:47.00px;top:820.15px;width:1953.00px;height:1.00px;background:#374155;"></div>
<div class="a" style="left:47.00px;top:851.15px;width:1953.00px;height:1.00px;background:#374155;"></div>
<div class="a" style="left:47.00px;top:821.15px;width:231.50px;height:30.00px;background:#1e283a;"></div>
<div class="a" style="left:278.00px;top:820.15px;width:1.00px;height:32.00px;background:#374155;"></div>
<div class="a" style="left:47.00px;top:820.15px;width:4.00px;height:32.00px;background:#14b8a6;"></div>
<div class="a" style="left:294.00px;top:821.15px;width:233.00px;height:30.00px;background:#030618;"></div>
<div class="a" style="left:294.00px;top:820.15px;width:1.00px;height:32.00px;background:#374155;"></div>
<div class="a" style="left:526.00px;top:820.15px;width:1.00px;height:32.00px;background:#374155;"></div>
<div class="a" style="left:399.00px;top:825.65px;width:23.00px;height:21.00px;background:#293344;border-radius:11px;"></div>
<div class="t" style="left:399.50px;top:825.65px;width:22px;height:21px;line-height:21px;text-align:center;font-size:12px;color:#c3cad6;">1</div>
<div class="a" style="left:542.00px;top:821.15px;width:245.00px;height:30.00px;background:#030618;"></div>
<div class="a" style="left:542.00px;top:820.15px;width:1.00px;height:32.00px;background:#374155;"></div>
<div class="a" style="left:786.00px;top:820.15px;width:1.00px;height:32.00px;background:#374155;"></div>
<div class="a" style="left:802.00px;top:821.15px;width:233.00px;height:30.00px;background:#030618;"></div>
<div class="a" style="left:802.00px;top:820.15px;width:1.00px;height:32.00px;background:#374155;"></div>
<div class="a" style="left:1034.00px;top:820.15px;width:1.00px;height:32.00px;background:#374155;"></div>
<div class="a" style="left:907.00px;top:825.65px;width:23.00px;height:21.00px;background:#293344;border-radius:11px;"></div>
<div class="t" style="left:907.50px;top:825.65px;width:22px;height:21px;line-height:21px;text-align:center;font-size:12px;color:#c3cad6;">3</div>
<div class="a" style="left:1050.00px;top:821.15px;width:233.00px;height:30.00px;background:#030618;"></div>
<div class="a" style="left:1050.00px;top:820.15px;width:1.00px;height:32.00px;background:#374155;"></div>
<div class="a" style="left:1282.00px;top:820.15px;width:1.00px;height:32.00px;background:#374155;"></div>
<div class="a" style="left:1155.00px;top:825.65px;width:23.00px;height:21.00px;background:#293344;border-radius:11px;"></div>
<div class="t" style="left:1155.50px;top:825.65px;width:22px;height:21px;line-height:21px;text-align:center;font-size:12px;color:#c3cad6;">2</div>
<div class="a" style="left:1298.00px;top:821.15px;width:233.00px;height:30.00px;background:#030618;"></div>
<div class="a" style="left:1298.00px;top:820.15px;width:1.00px;height:32.00px;background:#374155;"></div>
<div class="a" style="left:1530.00px;top:820.15px;width:1.00px;height:32.00px;background:#374155;"></div>
<div class="a" style="left:1403.00px;top:825.65px;width:23.00px;height:21.00px;background:#293344;border-radius:11px;"></div>
<div class="t" style="left:1403.50px;top:825.65px;width:22px;height:21px;line-height:21px;text-align:center;font-size:12px;color:#c3cad6;">2</div>
<div class="a" style="left:1546.00px;top:821.15px;width:233.00px;height:30.00px;background:#030618;"></div>
<div class="a" style="left:1546.00px;top:820.15px;width:1.00px;height:32.00px;background:#374155;"></div>
<div class="a" style="left:1778.00px;top:820.15px;width:1.00px;height:32.00px;background:#374155;"></div>
<div class="a" style="left:1651.00px;top:825.65px;width:23.00px;height:21.00px;background:#293344;border-radius:11px;"></div>
<div class="t" style="left:1651.50px;top:825.65px;width:22px;height:21px;line-height:21px;text-align:center;font-size:12px;color:#c3cad6;">2</div>
<div class="a" style="left:1794.00px;top:821.15px;width:233.00px;height:30.00px;background:#030618;"></div>
<div class="a" style="left:1794.00px;top:820.15px;width:1.00px;height:32.00px;background:#374155;"></div>
<div class="a" style="left:2026.00px;top:820.15px;width:1.00px;height:32.00px;background:#374155;"></div>
<div class="t " style="left:74.20px;top:829.20px;font-size:15.3px;line-height:15.3px;color:#e2e8f0;">UK &amp; Ireland</div>
<svg class="a" style="left:251.5px;top:830.15px" width="12" height="12" viewBox="0 0 12 12"><path d="M4.2 2 L8 6 L4.2 10" fill="none" stroke="#aab4c3" stroke-width="1.5" stroke-linecap="round" stroke-linejoin="round"/></svg>
<div class="a" style="left:47.00px;top:866.90px;width:1953.00px;height:32.00px;background:#141c2e;"></div>
<div class="a" style="left:47.00px;top:866.90px;width:1953.00px;height:1.00px;background:#374155;"></div>
<div class="a" style="left:47.00px;top:897.90px;width:1953.00px;height:1.00px;background:#374155;"></div>
<div class="a" style="left:47.00px;top:867.90px;width:231.50px;height:30.00px;background:#1e283a;"></div>
<div class="a" style="left:278.00px;top:866.90px;width:1.00px;height:32.00px;background:#374155;"></div>
<div class="a" style="left:47.00px;top:866.90px;width:4.00px;height:32.00px;background:#6366f1;"></div>
<div class="a" style="left:294.00px;top:867.90px;width:233.00px;height:30.00px;background:#030618;"></div>
<div class="a" style="left:294.00px;top:866.90px;width:1.00px;height:32.00px;background:#374155;"></div>
<div class="a" style="left:526.00px;top:866.90px;width:1.00px;height:32.00px;background:#374155;"></div>
<div class="a" style="left:399.00px;top:872.40px;width:23.00px;height:21.00px;background:#293344;border-radius:11px;"></div>
<div class="t" style="left:399.50px;top:872.40px;width:22px;height:21px;line-height:21px;text-align:center;font-size:12px;color:#c3cad6;">1</div>
<div class="a" style="left:542.00px;top:867.90px;width:245.00px;height:30.00px;background:#030618;"></div>
<div class="a" style="left:542.00px;top:866.90px;width:1.00px;height:32.00px;background:#374155;"></div>
<div class="a" style="left:786.00px;top:866.90px;width:1.00px;height:32.00px;background:#374155;"></div>
<div class="a" style="left:653.00px;top:872.40px;width:23.00px;height:21.00px;background:#293344;border-radius:11px;"></div>
<div class="t" style="left:653.50px;top:872.40px;width:22px;height:21px;line-height:21px;text-align:center;font-size:12px;color:#c3cad6;">4</div>
<div class="a" style="left:802.00px;top:867.90px;width:233.00px;height:30.00px;background:#030618;"></div>
<div class="a" style="left:802.00px;top:866.90px;width:1.00px;height:32.00px;background:#374155;"></div>
<div class="a" style="left:1034.00px;top:866.90px;width:1.00px;height:32.00px;background:#374155;"></div>
<div class="a" style="left:907.00px;top:872.40px;width:23.00px;height:21.00px;background:#293344;border-radius:11px;"></div>
<div class="t" style="left:907.50px;top:872.40px;width:22px;height:21px;line-height:21px;text-align:center;font-size:12px;color:#c3cad6;">1</div>
<div class="a" style="left:1050.00px;top:867.90px;width:233.00px;height:30.00px;background:#030618;"></div>
<div class="a" style="left:1050.00px;top:866.90px;width:1.00px;height:32.00px;background:#374155;"></div>
<div class="a" style="left:1282.00px;top:866.90px;width:1.00px;height:32.00px;background:#374155;"></div>
<div class="a" style="left:1155.00px;top:872.40px;width:23.00px;height:21.00px;background:#293344;border-radius:11px;"></div>
<div class="t" style="left:1155.50px;top:872.40px;width:22px;height:21px;line-height:21px;text-align:center;font-size:12px;color:#c3cad6;">1</div>
<div class="a" style="left:1298.00px;top:867.90px;width:233.00px;height:30.00px;background:#030618;"></div>
<div class="a" style="left:1298.00px;top:866.90px;width:1.00px;height:32.00px;background:#374155;"></div>
<div class="a" style="left:1530.00px;top:866.90px;width:1.00px;height:32.00px;background:#374155;"></div>
<div class="a" style="left:1403.00px;top:872.40px;width:23.00px;height:21.00px;background:#293344;border-radius:11px;"></div>
<div class="t" style="left:1403.50px;top:872.40px;width:22px;height:21px;line-height:21px;text-align:center;font-size:12px;color:#c3cad6;">3</div>
<div class="a" style="left:1546.00px;top:867.90px;width:233.00px;height:30.00px;background:#030618;"></div>
<div class="a" style="left:1546.00px;top:866.90px;width:1.00px;height:32.00px;background:#374155;"></div>
<div class="a" style="left:1778.00px;top:866.90px;width:1.00px;height:32.00px;background:#374155;"></div>
<div class="a" style="left:1794.00px;top:867.90px;width:233.00px;height:30.00px;background:#030618;"></div>
<div class="a" style="left:1794.00px;top:866.90px;width:1.00px;height:32.00px;background:#374155;"></div>
<div class="a" style="left:2026.00px;top:866.90px;width:1.00px;height:32.00px;background:#374155;"></div>
<div class="a" style="left:1899.00px;top:872.40px;width:23.00px;height:21.00px;background:#293344;border-radius:11px;"></div>
<div class="t" style="left:1899.50px;top:872.40px;width:22px;height:21px;line-height:21px;text-align:center;font-size:12px;color:#c3cad6;">1</div>
<div class="t " style="left:74.20px;top:875.95px;font-size:15.3px;line-height:15.3px;color:#e2e8f0;">DACH</div>
<svg class="a" style="left:251.5px;top:876.90px" width="12" height="12" viewBox="0 0 12 12"><path d="M4.2 2 L8 6 L4.2 10" fill="none" stroke="#aab4c3" stroke-width="1.5" stroke-linecap="round" stroke-linejoin="round"/></svg>
<div class="a" style="left:47.00px;top:913.65px;width:1953.00px;height:32.00px;background:#141c2e;"></div>
<div class="a" style="left:47.00px;top:913.65px;width:1953.00px;height:1.00px;background:#374155;"></div>
<div class="a" style="left:47.00px;top:944.65px;width:1953.00px;height:1.00px;background:#374155;"></div>
<div class="a" style="left:47.00px;top:914.65px;width:231.50px;height:30.00px;background:#1e283a;"></div>
<div class="a" style="left:278.00px;top:913.65px;width:1.00px;height:32.00px;background:#374155;"></div>
<div class="a" style="left:47.00px;top:913.65px;width:4.00px;height:32.00px;background:#0ea5e9;"></div>
<div class="a" style="left:294.00px;top:914.65px;width:233.00px;height:30.00px;background:#030618;"></div>
<div class="a" style="left:294.00px;top:913.65px;width:1.00px;height:32.00px;background:#374155;"></div>
<div class="a" style="left:526.00px;top:913.65px;width:1.00px;height:32.00px;background:#374155;"></div>
<div class="a" style="left:399.00px;top:919.15px;width:23.00px;height:21.00px;background:#293344;border-radius:11px;"></div>
<div class="t" style="left:399.50px;top:919.15px;width:22px;height:21px;line-height:21px;text-align:center;font-size:12px;color:#c3cad6;">1</div>
<div class="a" style="left:542.00px;top:914.65px;width:245.00px;height:30.00px;background:#030618;"></div>
<div class="a" style="left:542.00px;top:913.65px;width:1.00px;height:32.00px;background:#374155;"></div>
<div class="a" style="left:786.00px;top:913.65px;width:1.00px;height:32.00px;background:#374155;"></div>
<div class="a" style="left:653.00px;top:919.15px;width:23.00px;height:21.00px;background:#293344;border-radius:11px;"></div>
<div class="t" style="left:653.50px;top:919.15px;width:22px;height:21px;line-height:21px;text-align:center;font-size:12px;color:#c3cad6;">1</div>
<div class="a" style="left:802.00px;top:914.65px;width:233.00px;height:30.00px;background:#030618;"></div>
<div class="a" style="left:802.00px;top:913.65px;width:1.00px;height:32.00px;background:#374155;"></div>
<div class="a" style="left:1034.00px;top:913.65px;width:1.00px;height:32.00px;background:#374155;"></div>
<div class="a" style="left:907.00px;top:919.15px;width:23.00px;height:21.00px;background:#293344;border-radius:11px;"></div>
<div class="t" style="left:907.50px;top:919.15px;width:22px;height:21px;line-height:21px;text-align:center;font-size:12px;color:#c3cad6;">3</div>
<div class="a" style="left:1050.00px;top:914.65px;width:233.00px;height:30.00px;background:#030618;"></div>
<div class="a" style="left:1050.00px;top:913.65px;width:1.00px;height:32.00px;background:#374155;"></div>
<div class="a" style="left:1282.00px;top:913.65px;width:1.00px;height:32.00px;background:#374155;"></div>
<div class="a" style="left:1155.00px;top:919.15px;width:23.00px;height:21.00px;background:#293344;border-radius:11px;"></div>
<div class="t" style="left:1155.50px;top:919.15px;width:22px;height:21px;line-height:21px;text-align:center;font-size:12px;color:#c3cad6;">1</div>
<div class="a" style="left:1298.00px;top:914.65px;width:233.00px;height:30.00px;background:#030618;"></div>
<div class="a" style="left:1298.00px;top:913.65px;width:1.00px;height:32.00px;background:#374155;"></div>
<div class="a" style="left:1530.00px;top:913.65px;width:1.00px;height:32.00px;background:#374155;"></div>
<div class="a" style="left:1403.00px;top:919.15px;width:23.00px;height:21.00px;background:#293344;border-radius:11px;"></div>
<div class="t" style="left:1403.50px;top:919.15px;width:22px;height:21px;line-height:21px;text-align:center;font-size:12px;color:#c3cad6;">3</div>
<div class="a" style="left:1546.00px;top:914.65px;width:233.00px;height:30.00px;background:#030618;"></div>
<div class="a" style="left:1546.00px;top:913.65px;width:1.00px;height:32.00px;background:#374155;"></div>
<div class="a" style="left:1778.00px;top:913.65px;width:1.00px;height:32.00px;background:#374155;"></div>
<div class="a" style="left:1651.00px;top:919.15px;width:23.00px;height:21.00px;background:#293344;border-radius:11px;"></div>
<div class="t" style="left:1651.50px;top:919.15px;width:22px;height:21px;line-height:21px;text-align:center;font-size:12px;color:#c3cad6;">1</div>
<div class="a" style="left:1794.00px;top:914.65px;width:233.00px;height:30.00px;background:#030618;"></div>
<div class="a" style="left:1794.00px;top:913.65px;width:1.00px;height:32.00px;background:#374155;"></div>
<div class="a" style="left:2026.00px;top:913.65px;width:1.00px;height:32.00px;background:#374155;"></div>
<div class="t " style="left:74.20px;top:922.70px;font-size:15.3px;line-height:15.3px;color:#e2e8f0;">Nordics</div>
<svg class="a" style="left:251.5px;top:923.65px" width="12" height="12" viewBox="0 0 12 12"><path d="M4.2 2 L8 6 L4.2 10" fill="none" stroke="#aab4c3" stroke-width="1.5" stroke-linecap="round" stroke-linejoin="round"/></svg>
<div class="a" style="left:47.00px;top:960.40px;width:1953.00px;height:32.00px;background:#141c2e;"></div>
<div class="a" style="left:47.00px;top:960.40px;width:1953.00px;height:1.00px;background:#374155;"></div>
<div class="a" style="left:47.00px;top:991.40px;width:1953.00px;height:1.00px;background:#374155;"></div>
<div class="a" style="left:47.00px;top:961.40px;width:231.50px;height:30.00px;background:#1e283a;"></div>
<div class="a" style="left:278.00px;top:960.40px;width:1.00px;height:32.00px;background:#374155;"></div>
<div class="a" style="left:47.00px;top:960.40px;width:4.00px;height:32.00px;background:#f43f5e;"></div>
<div class="a" style="left:294.00px;top:961.40px;width:233.00px;height:30.00px;background:#030618;"></div>
<div class="a" style="left:294.00px;top:960.40px;width:1.00px;height:32.00px;background:#374155;"></div>
<div class="a" style="left:526.00px;top:960.40px;width:1.00px;height:32.00px;background:#374155;"></div>
<div class="a" style="left:542.00px;top:961.40px;width:245.00px;height:30.00px;background:#030618;"></div>
<div class="a" style="left:542.00px;top:960.40px;width:1.00px;height:32.00px;background:#374155;"></div>
<div class="a" style="left:786.00px;top:960.40px;width:1.00px;height:32.00px;background:#374155;"></div>
<div class="a" style="left:653.00px;top:965.90px;width:23.00px;height:21.00px;background:#293344;border-radius:11px;"></div>
<div class="t" style="left:653.50px;top:965.90px;width:22px;height:21px;line-height:21px;text-align:center;font-size:12px;color:#c3cad6;">1</div>
<div class="a" style="left:802.00px;top:961.40px;width:233.00px;height:30.00px;background:#030618;"></div>
<div class="a" style="left:802.00px;top:960.40px;width:1.00px;height:32.00px;background:#374155;"></div>
<div class="a" style="left:1034.00px;top:960.40px;width:1.00px;height:32.00px;background:#374155;"></div>
<div class="a" style="left:907.00px;top:965.90px;width:23.00px;height:21.00px;background:#293344;border-radius:11px;"></div>
<div class="t" style="left:907.50px;top:965.90px;width:22px;height:21px;line-height:21px;text-align:center;font-size:12px;color:#c3cad6;">4</div>
<div class="a" style="left:1050.00px;top:961.40px;width:233.00px;height:30.00px;background:#030618;"></div>
<div class="a" style="left:1050.00px;top:960.40px;width:1.00px;height:32.00px;background:#374155;"></div>
<div class="a" style="left:1282.00px;top:960.40px;width:1.00px;height:32.00px;background:#374155;"></div>
<div class="a" style="left:1155.00px;top:965.90px;width:23.00px;height:21.00px;background:#293344;border-radius:11px;"></div>
<div class="t" style="left:1155.50px;top:965.90px;width:22px;height:21px;line-height:21px;text-align:center;font-size:12px;color:#c3cad6;">3</div>
<div class="a" style="left:1298.00px;top:961.40px;width:233.00px;height:30.00px;background:#030618;"></div>
<div class="a" style="left:1298.00px;top:960.40px;width:1.00px;height:32.00px;background:#374155;"></div>
<div class="a" style="left:1530.00px;top:960.40px;width:1.00px;height:32.00px;background:#374155;"></div>
<div class="a" style="left:1403.00px;top:965.90px;width:23.00px;height:21.00px;background:#293344;border-radius:11px;"></div>
<div class="t" style="left:1403.50px;top:965.90px;width:22px;height:21px;line-height:21px;text-align:center;font-size:12px;color:#c3cad6;">1</div>
<div class="a" style="left:1546.00px;top:961.40px;width:233.00px;height:30.00px;background:#030618;"></div>
<div class="a" style="left:1546.00px;top:960.40px;width:1.00px;height:32.00px;background:#374155;"></div>
<div class="a" style="left:1778.00px;top:960.40px;width:1.00px;height:32.00px;background:#374155;"></div>
<div class="a" style="left:1651.00px;top:965.90px;width:23.00px;height:21.00px;background:#293344;border-radius:11px;"></div>
<div class="t" style="left:1651.50px;top:965.90px;width:22px;height:21px;line-height:21px;text-align:center;font-size:12px;color:#c3cad6;">1</div>
<div class="a" style="left:1794.00px;top:961.40px;width:233.00px;height:30.00px;background:#030618;"></div>
<div class="a" style="left:1794.00px;top:960.40px;width:1.00px;height:32.00px;background:#374155;"></div>
<div class="a" style="left:2026.00px;top:960.40px;width:1.00px;height:32.00px;background:#374155;"></div>
<div class="t " style="left:74.20px;top:969.45px;font-size:15.3px;line-height:15.3px;color:#e2e8f0;">Middle East</div>
<svg class="a" style="left:251.5px;top:970.40px" width="12" height="12" viewBox="0 0 12 12"><path d="M4.2 2 L8 6 L4.2 10" fill="none" stroke="#aab4c3" stroke-width="1.5" stroke-linecap="round" stroke-linejoin="round"/></svg>
<div class="a" style="left:47.00px;top:1007.15px;width:1953.00px;height:32.00px;background:#141c2e;"></div>
<div class="a" style="left:47.00px;top:1007.15px;width:1953.00px;height:1.00px;background:#374155;"></div>
<div class="a" style="left:47.00px;top:1038.15px;width:1953.00px;height:1.00px;background:#374155;"></div>
<div class="a" style="left:47.00px;top:1008.15px;width:231.50px;height:30.00px;background:#1e283a;"></div>
<div class="a" style="left:278.00px;top:1007.15px;width:1.00px;height:32.00px;background:#374155;"></div>
<div class="a" style="left:47.00px;top:1007.15px;width:4.00px;height:32.00px;background:#a855f7;"></div>
<div class="a" style="left:294.00px;top:1008.15px;width:233.00px;height:30.00px;background:#030618;"></div>
<div class="a" style="left:294.00px;top:1007.15px;width:1.00px;height:32.00px;background:#374155;"></div>
<div class="a" style="left:526.00px;top:1007.15px;width:1.00px;height:32.00px;background:#374155;"></div>
<div class="a" style="left:399.00px;top:1012.65px;width:23.00px;height:21.00px;background:#293344;border-radius:11px;"></div>
<div class="t" style="left:399.50px;top:1012.65px;width:22px;height:21px;line-height:21px;text-align:center;font-size:12px;color:#c3cad6;">1</div>
<div class="a" style="left:542.00px;top:1008.15px;width:245.00px;height:30.00px;background:#030618;"></div>
<div class="a" style="left:542.00px;top:1007.15px;width:1.00px;height:32.00px;background:#374155;"></div>
<div class="a" style="left:786.00px;top:1007.15px;width:1.00px;height:32.00px;background:#374155;"></div>
<div class="a" style="left:653.00px;top:1012.65px;width:23.00px;height:21.00px;background:#293344;border-radius:11px;"></div>
<div class="t" style="left:653.50px;top:1012.65px;width:22px;height:21px;line-height:21px;text-align:center;font-size:12px;color:#c3cad6;">2</div>
<div class="a" style="left:802.00px;top:1008.15px;width:233.00px;height:30.00px;background:#030618;"></div>
<div class="a" style="left:802.00px;top:1007.15px;width:1.00px;height:32.00px;background:#374155;"></div>
<div class="a" style="left:1034.00px;top:1007.15px;width:1.00px;height:32.00px;background:#374155;"></div>
<div class="a" style="left:907.00px;top:1012.65px;width:23.00px;height:21.00px;background:#293344;border-radius:11px;"></div>
<div class="t" style="left:907.50px;top:1012.65px;width:22px;height:21px;line-height:21px;text-align:center;font-size:12px;color:#c3cad6;">2</div>
<div class="a" style="left:1050.00px;top:1008.15px;width:233.00px;height:30.00px;background:#030618;"></div>
<div class="a" style="left:1050.00px;top:1007.15px;width:1.00px;height:32.00px;background:#374155;"></div>
<div class="a" style="left:1282.00px;top:1007.15px;width:1.00px;height:32.00px;background:#374155;"></div>
<div class="a" style="left:1155.00px;top:1012.65px;width:23.00px;height:21.00px;background:#293344;border-radius:11px;"></div>
<div class="t" style="left:1155.50px;top:1012.65px;width:22px;height:21px;line-height:21px;text-align:center;font-size:12px;color:#c3cad6;">1</div>
<div class="a" style="left:1298.00px;top:1008.15px;width:233.00px;height:30.00px;background:#030618;"></div>
<div class="a" style="left:1298.00px;top:1007.15px;width:1.00px;height:32.00px;background:#374155;"></div>
<div class="a" style="left:1530.00px;top:1007.15px;width:1.00px;height:32.00px;background:#374155;"></div>
<div class="a" style="left:1403.00px;top:1012.65px;width:23.00px;height:21.00px;background:#293344;border-radius:11px;"></div>
<div class="t" style="left:1403.50px;top:1012.65px;width:22px;height:21px;line-height:21px;text-align:center;font-size:12px;color:#c3cad6;">2</div>
<div class="a" style="left:1546.00px;top:1008.15px;width:233.00px;height:30.00px;background:#030618;"></div>
<div class="a" style="left:1546.00px;top:1007.15px;width:1.00px;height:32.00px;background:#374155;"></div>
<div class="a" style="left:1778.00px;top:1007.15px;width:1.00px;height:32.00px;background:#374155;"></div>
<div class="a" style="left:1651.00px;top:1012.65px;width:23.00px;height:21.00px;background:#293344;border-radius:11px;"></div>
<div class="t" style="left:1651.50px;top:1012.65px;width:22px;height:21px;line-height:21px;text-align:center;font-size:12px;color:#c3cad6;">2</div>
<div class="a" style="left:1794.00px;top:1008.15px;width:233.00px;height:30.00px;background:#030618;"></div>
<div class="a" style="left:1794.00px;top:1007.15px;width:1.00px;height:32.00px;background:#374155;"></div>
<div class="a" style="left:2026.00px;top:1007.15px;width:1.00px;height:32.00px;background:#374155;"></div>
<div class="t " style="left:74.20px;top:1016.20px;font-size:15.3px;line-height:15.3px;color:#e2e8f0;">Southeast Asia</div>
<svg class="a" style="left:251.5px;top:1017.15px" width="12" height="12" viewBox="0 0 12 12"><path d="M4.2 2 L8 6 L4.2 10" fill="none" stroke="#aab4c3" stroke-width="1.5" stroke-linecap="round" stroke-linejoin="round"/></svg>
<div class="a" style="left:47.00px;top:1053.90px;width:1953.00px;height:32.00px;background:#141c2e;"></div>
<div class="a" style="left:47.00px;top:1053.90px;width:1953.00px;height:1.00px;background:#374155;"></div>
<div class="a" style="left:47.00px;top:1084.90px;width:1953.00px;height:1.00px;background:#374155;"></div>
<div class="a" style="left:47.00px;top:1054.90px;width:231.50px;height:30.00px;background:#1e283a;"></div>
<div class="a" style="left:278.00px;top:1053.90px;width:1.00px;height:32.00px;background:#374155;"></div>
<div class="a" style="left:47.00px;top:1053.90px;width:4.00px;height:32.00px;background:#eab308;"></div>
<div class="a" style="left:294.00px;top:1054.90px;width:233.00px;height:30.00px;background:#030618;"></div>
<div class="a" style="left:294.00px;top:1053.90px;width:1.00px;height:32.00px;background:#374155;"></div>
<div class="a" style="left:526.00px;top:1053.90px;width:1.00px;height:32.00px;background:#374155;"></div>
<div class="a" style="left:399.00px;top:1059.40px;width:23.00px;height:21.00px;background:#293344;border-radius:11px;"></div>
<div class="t" style="left:399.50px;top:1059.40px;width:22px;height:21px;line-height:21px;text-align:center;font-size:12px;color:#c3cad6;">2</div>
<div class="a" style="left:542.00px;top:1054.90px;width:245.00px;height:30.00px;background:#030618;"></div>
<div class="a" style="left:542.00px;top:1053.90px;width:1.00px;height:32.00px;background:#374155;"></div>
<div class="a" style="left:786.00px;top:1053.90px;width:1.00px;height:32.00px;background:#374155;"></div>
<div class="a" style="left:653.00px;top:1059.40px;width:23.00px;height:21.00px;background:#293344;border-radius:11px;"></div>
<div class="t" style="left:653.50px;top:1059.40px;width:22px;height:21px;line-height:21px;text-align:center;font-size:12px;color:#c3cad6;">1</div>
<div class="a" style="left:802.00px;top:1054.90px;width:233.00px;height:30.00px;background:#030618;"></div>
<div class="a" style="left:802.00px;top:1053.90px;width:1.00px;height:32.00px;background:#374155;"></div>
<div class="a" style="left:1034.00px;top:1053.90px;width:1.00px;height:32.00px;background:#374155;"></div>
<div class="a" style="left:907.00px;top:1059.40px;width:23.00px;height:21.00px;background:#293344;border-radius:11px;"></div>
<div class="t" style="left:907.50px;top:1059.40px;width:22px;height:21px;line-height:21px;text-align:center;font-size:12px;color:#c3cad6;">1</div>
<div class="a" style="left:1050.00px;top:1054.90px;width:233.00px;height:30.00px;background:#030618;"></div>
<div class="a" style="left:1050.00px;top:1053.90px;width:1.00px;height:32.00px;background:#374155;"></div>
<div class="a" style="left:1282.00px;top:1053.90px;width:1.00px;height:32.00px;background:#374155;"></div>
<div class="a" style="left:1298.00px;top:1054.90px;width:233.00px;height:30.00px;background:#030618;"></div>
<div class="a" style="left:1298.00px;top:1053.90px;width:1.00px;height:32.00px;background:#374155;"></div>
<div class="a" style="left:1530.00px;top:1053.90px;width:1.00px;height:32.00px;background:#374155;"></div>
<div class="a" style="left:1546.00px;top:1054.90px;width:233.00px;height:30.00px;background:#030618;"></div>
<div class="a" style="left:1546.00px;top:1053.90px;width:1.00px;height:32.00px;background:#374155;"></div>
<div class="a" style="left:1778.00px;top:1053.90px;width:1.00px;height:32.00px;background:#374155;"></div>
<div class="a" style="left:1651.00px;top:1059.40px;width:23.00px;height:21.00px;background:#293344;border-radius:11px;"></div>
<div class="t" style="left:1651.50px;top:1059.40px;width:22px;height:21px;line-height:21px;text-align:center;font-size:12px;color:#c3cad6;">2</div>
<div class="a" style="left:1794.00px;top:1054.90px;width:233.00px;height:30.00px;background:#030618;"></div>
<div class="a" style="left:1794.00px;top:1053.90px;width:1.00px;height:32.00px;background:#374155;"></div>
<div class="a" style="left:2026.00px;top:1053.90px;width:1.00px;height:32.00px;background:#374155;"></div>
<div class="a" style="left:1899.00px;top:1059.40px;width:23.00px;height:21.00px;background:#293344;border-radius:11px;"></div>
<div class="t" style="left:1899.50px;top:1059.40px;width:22px;height:21px;line-height:21px;text-align:center;font-size:12px;color:#c3cad6;">3</div>
<div class="t " style="left:74.20px;top:1062.95px;font-size:15.3px;line-height:15.3px;color:#e2e8f0;">Japan &amp; Korea</div>
<svg class="a" style="left:251.5px;top:1063.90px" width="12" height="12" viewBox="0 0 12 12"><path d="M4.2 2 L8 6 L4.2 10" fill="none" stroke="#aab4c3" stroke-width="1.5" stroke-linecap="round" stroke-linejoin="round"/></svg>
<div class="t " style="left:74.00px;top:454.53px;font-size:14.5px;line-height:14.5px;color:#e2e8f0;">APAC</div>
<div class="t " style="left:74.00px;top:474.00px;font-size:13px;line-height:13px;color:#94a3b8;">apac-sales@exampl...</div>
<svg class="a" style="left:214px;top:465px" width="12" height="10" viewBox="0 0 12 10"><path d="M2 2.6 L9.6 7.6" stroke="#2c3648" stroke-width="2.6" stroke-linecap="round"/></svg>
<div class="a" style="left:228px;top:460.7px;width:18.8px;height:19px;box-sizing:border-box;border:2px solid #4a84ea;border-radius:5.5px;background:#14234a;"></div>
<svg class="a" style="left:228px;top:460.7px" width="19" height="19" viewBox="0 0 19 19" fill="none" stroke="#8fb4ea" stroke-width="1.2"><circle cx="9.4" cy="9.5" r="2.8"/><path d="M9.4 3v3.7M9.4 12.3v3.7M2.8 9.5h3.8M12.2 9.5h3.8"/></svg>
<svg class="a" style="left:251px;top:465px" width="12" height="9" viewBox="0 0 12 9"><path d="M2 2.6 L6 6.6 L10 2.6" fill="none" stroke="#aab4c3" stroke-width="1.5" stroke-linecap="round" stroke-linejoin="round"/></svg>
<div class="a" style="left:47.00px;top:1084.40px;width:1953.00px;height:17.00px;background:#151d3b;"></div>
<div class="a" style="left:47.00px;top:1084.40px;width:1953.00px;height:1.30px;background:#3b5a8a;"></div>
<div class="a" style="left:47.00px;top:1100.40px;width:1953.00px;height:1.30px;background:#3b5a8a;"></div>
<svg class="a" style="left:406.00px;top:1089px" width="9" height="9" viewBox="0 0 9 9"><path d="M4.5 1.3v6.4M1.3 4.5h6.4" stroke="#6ea8f8" stroke-width="1.5"/></svg>
<svg class="a" style="left:660.00px;top:1089px" width="9" height="9" viewBox="0 0 9 9"><path d="M4.5 1.3v6.4M1.3 4.5h6.4" stroke="#6ea8f8" stroke-width="1.5"/></svg>
<svg class="a" style="left:914.00px;top:1089px" width="9" height="9" viewBox="0 0 9 9"><path d="M4.5 1.3v6.4M1.3 4.5h6.4" stroke="#6ea8f8" stroke-width="1.5"/></svg>
<svg class="a" style="left:1162.00px;top:1089px" width="9" height="9" viewBox="0 0 9 9"><path d="M4.5 1.3v6.4M1.3 4.5h6.4" stroke="#6ea8f8" stroke-width="1.5"/></svg>
<svg class="a" style="left:1410.00px;top:1089px" width="9" height="9" viewBox="0 0 9 9"><path d="M4.5 1.3v6.4M1.3 4.5h6.4" stroke="#6ea8f8" stroke-width="1.5"/></svg>
<svg class="a" style="left:1658.00px;top:1089px" width="9" height="9" viewBox="0 0 9 9"><path d="M4.5 1.3v6.4M1.3 4.5h6.4" stroke="#6ea8f8" stroke-width="1.5"/></svg>
<svg class="a" style="left:1906.00px;top:1089px" width="9" height="9" viewBox="0 0 9 9"><path d="M4.5 1.3v6.4M1.3 4.5h6.4" stroke="#6ea8f8" stroke-width="1.5"/></svg>
<div class="card" style="left:303.50px;top:285.00px;width:213.50px;height:80.5px;border-color:#b4582a;">
<div class="tt" style="left:11px;top:8.3px">Andean Mining Corp --<br>Safety Compliance Board</div>
<div class="meta" style="width:191.50px">
<span class="bdg" style="color:#ec7a35;background:rgba(249,115,22,0.16);border-color:rgba(249,115,22,0.22);width:48.8px;">Renewal</span>
<span class="bdg" style="color:#4a86e8;background:rgba(59,130,246,0.16);border-color:rgba(59,130,246,0.22);width:53.3px;">Enterpr...</span>
<span class="due" style="font-size:11.4px">Due in 5 days</span>
<span class="num">7</span>
</div></div>
<div class="t " style="left:310.60px;top:376.83px;font-size:13.2px;line-height:13.2px;color:#5c6676;">+ Add card</div>
<div class="card" style="left:551.00px;top:285.00px;width:226.50px;height:80.5px;border-color:#3b62a8;">
<div class="tt" style="left:11px;top:8.3px">Dragon Logistics -- Cross-<br>Border Shipping Tracker</div>
<div class="meta" style="width:204.50px">
<span class="bdg" style="color:#4a86e8;background:rgba(59,130,246,0.16);border-color:rgba(59,130,246,0.22);width:53.3px;">Enterpr...</span>
<span class="due" style="">Due 04/29/2026</span>
<span class="num">4</span>
<span class="tim"><svg width="9" height="10" viewBox="0 0 9 10"><circle cx="4.5" cy="5.6" r="3.2" fill="none" stroke="#94711e" stroke-width="1"/><path d="M4.5 5.6V3.9M3.4 1.1h2.2" stroke="#94711e" stroke-width="1"/></svg></span><span class="mv">moved 02/</span>
</div></div>
<div class="card" style="left:551.00px;top:371.60px;width:226.50px;height:80.5px;border-color:#9a3a44;">
<div class="tt" style="left:11px;top:8.3px">Clyde Engineering --<br>Manufacturing Workflow...</div>
<div class="meta" style="width:204.50px">
<span class="bdg" style="color:#eaa030;background:rgba(245,158,11,0.16);border-color:rgba(245,158,11,0.22);width:39.7px;">Upsell</span>
<span class="due" style="color:#e8707a">Due 03/15/2026</span>
<span class="num">3</span>
<span class="tim"><svg width="9" height="10" viewBox="0 0 9 10"><circle cx="4.5" cy="5.6" r="3.2" fill="none" stroke="#94711e" stroke-width="1"/><path d="M4.5 5.6V3.9M3.4 1.1h2.2" stroke="#94711e" stroke-width="1"/></svg></span><span class="mv">moved 02/10</span>
</div></div>
<div class="card" style="left:551.00px;top:458.20px;width:226.50px;height:80.5px;border-color:#9a3a44;">
<div class="tt" style="left:11px;top:8.3px">Oslo Energy -- Renewable<br>Project Board</div>
<div class="meta" style="width:204.50px">
<span class="bdg" style="color:#4a86e8;background:rgba(59,130,246,0.16);border-color:rgba(59,130,246,0.22);width:53.3px;">Enterpr...</span>
<span class="due" style="">Due 04/20/2026</span>
<span class="num">5</span>
<span class="tim"><svg width="9" height="10" viewBox="0 0 9 10"><circle cx="4.5" cy="5.6" r="3.2" fill="none" stroke="#94711e" stroke-width="1"/><path d="M4.5 5.6V3.9M3.4 1.1h2.2" stroke="#94711e" stroke-width="1"/></svg></span><span class="mv">moved 02/</span>
</div></div>
<div class="card" style="left:551.00px;top:544.80px;width:226.50px;height:80.5px;border-color:#b4582a;">
<div class="tt" style="left:11px;top:8.3px">Bangkok Retail -- Store<br>Operations Board</div>
<div class="meta" style="width:204.50px">
<span class="bdg" style="color:#22b07f;background:rgba(16,185,129,0.16);border-color:rgba(16,185,129,0.2);width:31.3px;">SMB</span>
<span class="bdg" style="color:#8f6ae8;background:rgba(139,92,246,0.2);border-color:rgba(139,92,246,0.25);width:53.4px;">Strateg...</span>
<span class="chk">&#10003;2/3</span>
<span class="due" style="">Due 04/21/2026</span>
<span class="num">2</span>
</div></div>
<div class="t " style="left:556.70px;top:636.83px;font-size:13.2px;line-height:13.2px;color:#5c6676;">+ Add card</div>
<div class="card" style="left:811.50px;top:285.00px;width:213.50px;height:80.5px;border-color:#b4582a;">
<div class="tt" style="left:11px;top:8.3px">Pinnacle Health -- HIPAA<br>Module Add-on</div>
<div class="meta" style="width:191.50px">
<span class="bdg" style="color:#4a86e8;background:rgba(59,130,246,0.16);border-color:rgba(59,130,246,0.22);width:53.3px;">Enterpr...</span>
<span class="bdg" style="color:#8f6ae8;background:rgba(139,92,246,0.2);border-color:rgba(139,92,246,0.25);width:53.4px;">Strateg...</span>
<span class="num">6</span>
<span class="tim"><svg width="9" height="10" viewBox="0 0 9 10"><circle cx="4.5" cy="5.6" r="3.2" fill="none" stroke="#94711e" stroke-width="1"/><path d="M4.5 5.6V3.9M3.4 1.1h2.2" stroke="#94711e" stroke-width="1"/></svg></span><span class="mv">moved 01/20</span>
</div></div>
<div class="card" style="left:811.50px;top:371.60px;width:213.50px;height:80.5px;border-color:#9a3a44;">
<div class="tt" style="left:11px;top:8.3px">EuroTech Solutions --<br>Engineering Workflow...</div>
<div class="meta" style="width:191.50px">
<span class="bdg" style="color:#ec7a35;background:rgba(249,115,22,0.16);border-color:rgba(249,115,22,0.22);width:48.8px;">Renewal</span>
<span class="chk">&#10003;1/2</span>
<span class="num">4</span>
<span class="tim"><svg width="9" height="10" viewBox="0 0 9 10"><circle cx="4.5" cy="5.6" r="3.2" fill="none" stroke="#94711e" stroke-width="1"/><path d="M4.5 5.6V3.9M3.4 1.1h2.2" stroke="#94711e" stroke-width="1"/></svg></span><span class="mv">moved 01/15</span>
<span class="bdg" style="color:#dc2626;background:rgba(239,68,68,0.16);border-color:rgba(239,68,68,0.3);width:30px;text-align:left;padding-left:5px">Un</span>
</div></div>
<div class="card" style="left:1307.00px;top:285.00px;width:214.00px;height:80.5px;border-color:#b4582a;">
<div class="tt" style="left:11px;top:8.3px">Outback Mining -- Safety<br>Incident Board</div>
<div class="meta" style="width:192.00px">
<span class="bdg" style="color:#22b07f;background:rgba(16,185,129,0.16);border-color:rgba(16,185,129,0.2);width:31.3px;">SMB</span>
<span class="bdg" style="color:#8f6ae8;background:rgba(139,92,246,0.2);border-color:rgba(139,92,246,0.25);width:53.4px;">Strateg...</span>
<span class="due" style="color:#e8707a">Due 02/15/2026</span>
<span class="num">2</span>
</div></div>
<div class="card" style="left:1307.00px;top:371.60px;width:214.00px;height:80.5px;border-color:#9a3a44;">
<div class="tt" style="left:11px;top:8.3px">Abu Dhabi Finance --<br>Investment Pipeline License</div>
<div class="meta" style="width:192.00px">
<span class="bdg" style="color:#ec7a35;background:rgba(249,115,22,0.16);border-color:rgba(249,115,22,0.22);width:48.8px;">Renewal</span>
<span class="bdg" style="color:#8f6ae8;background:rgba(139,92,246,0.2);border-color:rgba(139,92,246,0.25);width:53.4px;">Strateg...</span>
<span class="due" style="color:#e8707a">Due 03/25/2026</span>
</div></div>
<div class="card" style="left:1307.00px;top:458.20px;width:214.00px;height:80.5px;border-color:#9a3a44;">
<div class="tt" style="left:11px;top:8.3px">Kyoto Pharmaceuticals --<br>Drug Pipeline Board</div>
<div class="meta" style="width:192.00px">
<span class="due" style="">Due 04/23/2026</span>
<span class="num">5</span>
<span class="tim"><svg width="9" height="10" viewBox="0 0 9 10"><circle cx="4.5" cy="5.6" r="3.2" fill="none" stroke="#94711e" stroke-width="1"/><path d="M4.5 5.6V3.9M3.4 1.1h2.2" stroke="#94711e" stroke-width="1"/></svg></span><span class="mv">moved 02/07</span>
<span class="bdg" style="color:#ef4444;background:rgba(239,68,68,0.16);border-color:rgba(239,68,68,0.3);width:30px;text-align:left;padding-left:5px">Hi</span>
</div></div></body></html>
